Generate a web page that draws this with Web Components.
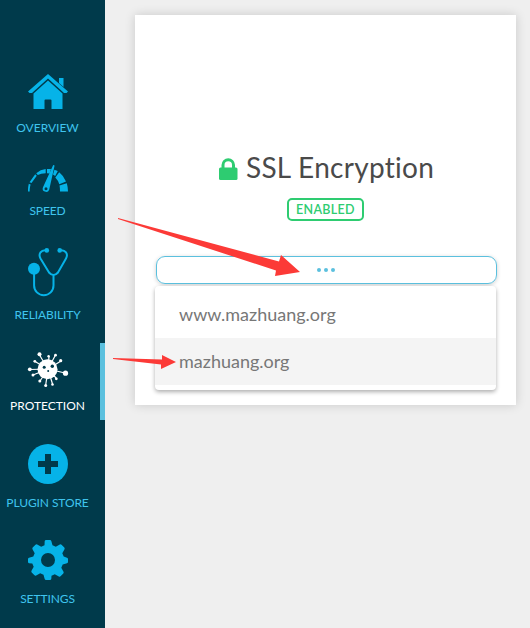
<!DOCTYPE html>
<html lang="en">
<head>
<meta charset="utf-8">
<title>SSL Encryption</title>
<style>
body { margin: 0; background: #efefef; font-family: Lato, "Liberation Sans", sans-serif; height: 628px; overflow: hidden; }
</style>
</head>
<body>
<app-shell></app-shell>
<script>
const define = (name, html) => customElements.define(name, class extends HTMLElement {
  constructor() {
    super();
    const t = document.createElement('template');
    t.innerHTML = html;
    this.attachShadow({ mode: 'open' }).append(t.content.cloneNode(true));
  }
});

define('nav-item', `<style>
:host { display: flex; flex-direction: column; align-items: center; box-sizing: border-box; width: 105px; padding: 9px 5px 6px 1px; color: #3fc4ee; border-right: 5px solid transparent; --icon: #06b3e8; }
:host([active]) { color: #fff; --icon: #fff; border-right-color: #5bc0de; }
.icon { display: block; width: 40px; color: var(--icon); }
.label { margin-top: 11px; margin-right: 1px; font-size: 12px; line-height: 16px; white-space: nowrap; letter-spacing: var(--ls, -.1px); }
::slotted(svg) { display: block; overflow: visible; }
</style><div class="icon"><slot name="icon"></slot></div><div class="label"><slot></slot></div>`);

define('side-nav', `<style>
:host { display: flex; flex-direction: column; gap: 14px; box-sizing: border-box; width: 105px; height: 628px; padding-top: 65px; background: #003a4b; }
nav-item { font-weight: 400; }
nav-item[active] { margin-bottom: 0.6px; --ls: 0px; }
</style>
<nav-item style="--ls:0px"><svg slot="icon" width="40" height="35" viewBox="0 0 40 35" fill="currentColor"><path d="M31 4h4.500v9l-4.500-4z"/><path d="M20 0 40 17.500 38.500 19H36L20 4.500 4 19H1.500L0 17.500z"/><path d="M20 6.500 34.500 19.500V35H23.500V26.500a1 1 0 0 0-1-1H17.500a1 1 0 0 0-1 1V35H5.500V19.500z"/></svg>OVERVIEW</nav-item>
<nav-item><svg slot="icon" width="40" height="27" viewBox="0 0 40 27" fill="currentColor"><path d="M0 26.500C0 23 .3 21 .8 18.800l1.800.8C1.900 22 1.700 24 1.700 26.500zM1.500 17.200 7.200 9.200l1.600 1.600L3.500 18zM8.200 8.200Q12.500 4.500 17.700 4v4.300Q13 8.400 9.800 10zM19 4h4l-1.400 4.600-2.600-.3zM26.400 4.700l3.400 1.400-2.600 5-2.200-1.500zM31.200 7.200Q36 11 38 16.500l-6.700 2.700q-1.300-4-4-6.700zM38.800 18.200q1.200 4 1.200 8.300h-8q.1-3.300-.5-6z"/><path fill-rule="evenodd" d="M25.200 0l1.400.4-5.400 24.400A3.300 3.300 0 1 1 15 22.200zM18 22.200a1.500 1.500 0 1 0 0 3 1.500 1.500 0 0 0 0-3z"/></svg>SPEED</nav-item>
<nav-item><svg slot="icon" width="40" height="48" viewBox="0 0 40 48" fill="none" stroke="currentColor" stroke-width="2" stroke-linecap="round"><path d="M18.500 2.300C13 1.500 10 6 12.500 10.500L21 24.500Q25.500 29.500 30 24.500L38 10.500C40.500 6 37.500 1.500 32 2.300M25.500 28v9.500a9.700 9.700 0 0 1-19.400 0V24"/><g fill="currentColor" stroke="none"><circle cx="18.800" cy="2.400" r="2.300"/><circle cx="31.700" cy="2.400" r="2.300"/><circle cx="6" cy="20.700" r="6"/></g></svg>RELIABILITY</nav-item>
<nav-item active><svg slot="icon" width="40" height="35" viewBox="0 0 40 35" fill="currentColor"><g stroke="currentColor" stroke-width="1.200"><path d="M20 17 11.500 3M20 17 21 4.500M20 17 27.500 3M20 17 33 9M20 17 2 17.500M20 17 37 21M20 17 5 23M20 17 12 29M20 17 17.700 33M20 17 24.500 32M20 17 28.500 26.500M20 17 7 9.500"/></g><circle cx="19.500" cy="17.200" r="10"/><circle cx="11.500" cy="2.300" r="2"/><circle cx="20.600" cy="4.200" r="1.200"/><circle cx="27.500" cy="3.200" r="1.400"/><circle cx="32.700" cy="8.700" r="1.600"/><circle cx="1.800" cy="17.300" r="1.900"/><circle cx="37.500" cy="21.200" r="2.600"/><circle cx="5" cy="23" r="1.500"/><circle cx="11.800" cy="29" r="1.500"/><circle cx="17.700" cy="33.500" r="1.500"/><circle cx="24.500" cy="32.500" r="1.300"/><circle cx="28.300" cy="26.800" r="1.400"/><circle cx="6.800" cy="9.300" r="1.400"/><g fill="#003a4b"><circle cx="16.200" cy="15.200" r="1.500"/><circle cx="24.300" cy="14.200" r="1.700"/><circle cx="20.200" cy="19" r="1"/></g></svg>PROTECTION</nav-item>
<nav-item><svg slot="icon" width="40" height="40" viewBox="0 0 40 40"><circle cx="20" cy="20" r="20" fill="currentColor"/><path d="M17 10h6v7h7v6h-7v7h-6v-7h-7v-6h7z" fill="#003a4b"/></svg>PLUGIN STORE</nav-item>
<nav-item><svg slot="icon" width="40" height="40" viewBox="0 0 40 40" fill="currentColor"><path fill-rule="evenodd" d="M18 0h4q1 0 1.300 1l1.200 4.300 3.300 1.400 4-2.200q1-.5 1.700.2l2.800 2.800q.7.700.2 1.700l-2.200 4 1.400 3.300L39 17.700q1 .3 1 1.300v3q0 1-1 1.300l-4.300 1.200-1.400 3.300 2.200 4q.5 1-.2 1.700l-2.800 2.800q-.7.700-1.700.2l-4-2.200-3.300 1.400L23.300 39q-.3 1-1.300 1h-4q-1 0-1.300-1l-1.200-4.300-3.300-1.400-4 2.200q-1 .5-1.700-.2l-2.800-2.800q-.7-.7-.2-1.700l2.200-4-1.400-3.300L1 23.300q-1-.3-1-1.300v-3q0-1 1-1.300l4.300-1.200 1.400-3.300-2.200-4q-.5-1 .2-1.700l2.800-2.800q.7-.7 1.700-.2l4 2.200 3.300-1.400L16.700 1q.3-1 1.300-1zM20 13a7 7 0 1 0 0 14 7 7 0 0 0 0-14z"/></svg>SETTINGS</nav-item>`);

define('status-badge', `<style>
:host { display: block; box-sizing: border-box; width: 77px; height: 23px; border: 2px solid #2ecc71; border-radius: 5px; color: #2ecc71; font-size: 12.500px; font-weight: 600; line-height: 19px; text-align: center; letter-spacing: .3px; }
</style><slot></slot>`);

define('menu-option', `<style>
:host { display: block; height: 47px; line-height: 47px; padding-left: 24.500px; font-size: 18px; color: #777; }
:host([hovered]) { background: #f4f4f4; }
</style><slot></slot>`);

define('domain-select', `<style>
:host { display: block; width: 341px; }
.field { box-sizing: border-box; height: 28px; border: 1px solid #5bc0de; border-radius: 9px; display: flex; align-items: center; justify-content: center; gap: 2.500px; box-shadow: 0 1px 4px rgba(0,0,0,.2); margin-left: 1px; width: 341px; }
.field i { width: 4.500px; height: 4.500px; border-radius: 50%; background: #5bc0de; }
.menu { margin-top: 2px; box-sizing: border-box; height: 104px; padding: 5px 0; background: #fff; border-radius: 4px; box-shadow: 0 2px 4px rgba(0,0,0,.32); position: relative; }
</style><div class="field"><i></i><i></i><i></i></div>
<div class="menu"><slot></slot></div>`);

define('ssl-card', `<style>
:host { display: flex; flex-direction: column; align-items: center; box-sizing: border-box; width: 381px; height: 390px; padding-top: 133px; background: #fff; box-shadow: 0 0 10px rgba(0,0,0,.16); }
.title { display: flex; align-items: flex-start; gap: 8px; height: 38px; margin-left: 2px; color: #4a4a4a; font-size: 28px; line-height: 38px; white-space: nowrap; letter-spacing: .28px; }
svg { display: block; margin-top: 10px; }
status-badge { margin-top: 12px; }
domain-select { margin-top: 35px; margin-left: -1px; }
</style>
<div class="title"><svg width="19" height="22" viewBox="0 0 19 22"><rect y="9.500" width="18.500" height="12.500" rx="1.500" fill="#2ecc71"/><path d="M4 11V7a5.200 5.200 0 0 1 10.500 0V11" fill="none" stroke="#2ecc71" stroke-width="3"/></svg><span>SSL Encryption</span></div>
<status-badge>ENABLED</status-badge>
<domain-select><menu-option>www.mazhuang.org</menu-option><menu-option hovered>mazhuang.org</menu-option></domain-select>`);

define('pointer-arrows', `<style>
:host { position: absolute; left: 0; top: 0; width: 530px; height: 628px; pointer-events: none; }
svg { display: block; }
</style><svg width="530" height="628" fill="#fc3a37"><path d="M118 218 279 261.500 281 255 300 272 275 276 276 270.500 118 219z"/><path d="M113 358 162 359.500V355L176 362 161 369V364.500L113 359z"/></svg>`);

define('app-shell', `<style>
:host { display: flex; align-items: flex-start; position: relative; width: 530px; height: 628px; overflow: hidden; }
ssl-card { margin: 15px 0 0 30px; }
</style><side-nav></side-nav><ssl-card></ssl-card><pointer-arrows></pointer-arrows>`);
</script>
</body>
</html>
